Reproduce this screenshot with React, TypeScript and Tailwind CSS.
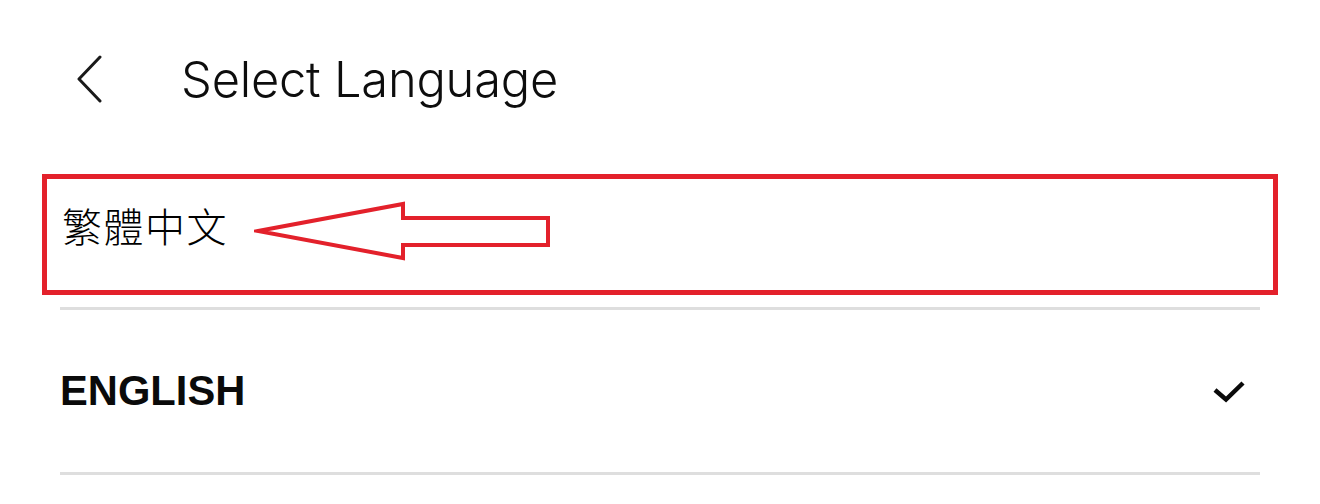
import React from "react";

export default function App() {
  return (
    <div className="w-[1320px] h-[504px] bg-white overflow-hidden">
      {/* Header */}
      <div className="flex items-center h-[160px]">
        <svg width="34" height="50" viewBox="0 0 34 50" className="ml-[70px] shrink-0">
          <path d="M30 2 L9 24 L30 46" fill="none" stroke="#1a1a1a" strokeWidth="3" strokeLinecap="round" strokeLinejoin="round" />
        </svg>
        <div className="ml-[77px] text-[48.8px] leading-none text-[#0d0d0d] font-light [font-family:Inter,'Noto_Sans',sans-serif] tracking-[-0.2px]">
          Select Language
        </div>
      </div>

      {/* Highlighted Chinese row */}
      <div className="relative mt-[14px] ml-[42px] w-[1236px] h-[121px] border-[5px] border-[#e3212b] pl-[15px] pt-[26px]">
        <div className="text-[40px] leading-[40px] text-[#000000] font-light tracking-[1.5px] [font-family:'Noto_Sans_CJK_TC','Noto_Sans_CJK_SC',sans-serif]">
          繁體中文
        </div>
        <svg width="300" height="64" viewBox="0 0 300 64" className="absolute left-[207px] top-[21px]">
          <path
            d="M4 31 L149 4 L149 18 L294 18 L294 45 L149 45 L149 58 Z"
            fill="none"
            stroke="#e3212b"
            strokeWidth="4"
            strokeLinejoin="miter"
            strokeMiterlimit="10"
          />
        </svg>
      </div>

      {/* Divider */}
      <div className="mt-[12px] ml-[60px] w-[1200px] h-[3px] bg-[#dedede]" />

      {/* English row */}
      <div className="ml-[60px] w-[1200px] h-[162px] flex items-center justify-between pr-[12px]">
        <div className="text-[41.7px] leading-none font-bold text-[#0a0a0a] [font-family:'Liberation_Sans',Arial,sans-serif]">
          ENGLISH
        </div>
        <svg width="38" height="28" viewBox="0 0 38 28" className="shrink-0 mt-[1px]">
          <path d="M5 12 L16 21.5 L33 5" fill="none" stroke="#0a0a0a" strokeWidth="4.5" strokeLinejoin="miter" />
        </svg>
      </div>

      {/* Divider */}
      <div className="ml-[60px] w-[1200px] h-[3px] bg-[#dedede]" />
    </div>
  );
}
